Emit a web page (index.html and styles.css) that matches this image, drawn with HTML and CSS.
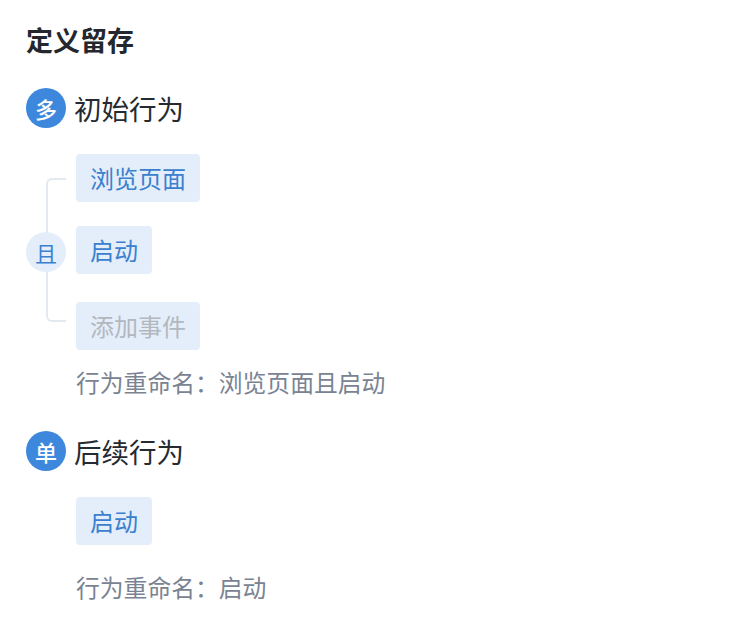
FILE: index.html
```html
<!DOCTYPE html>
<html lang="zh-CN">
<head>
<meta charset="utf-8">
<link rel="stylesheet" href="styles.css">
</head>
<body>
<div class="page">
  <h2 class="title">定义留存</h2>

  <section class="block">
    <div class="head"><span class="badge">多</span><span class="head-text">初始行为</span></div>
    <div class="group">
      <div class="connector">
        <div class="bracket"></div>
        <span class="and">且</span>
      </div>
      <div class="tags">
        <span class="tag">浏览页面</span>
        <span class="tag">启动</span>
        <span class="tag tag-add">添加事件</span>
      </div>
    </div>
    <div class="rename">行为重命名：浏览页面且启动</div>
  </section>

  <section class="block block-second">
    <div class="head"><span class="badge">单</span><span class="head-text">后续行为</span></div>
    <div class="group single">
      <div class="tags">
        <span class="tag">启动</span>
      </div>
    </div>
    <div class="rename rename-single">行为重命名：启动</div>
  </section>
</div>
</body>
</html>
```

FILE: styles.css
```css
* { box-sizing: border-box; }
html, body { margin: 0; padding: 0; background: #ffffff; }
body {
  font-family: "Noto Sans CJK SC", "Noto Sans", sans-serif;
  color: #23272e;
}
.page {
  padding: 20px 0 0 26px;
}
.title {
  margin: 0;
  font-size: 27px;
  line-height: 40px;
  font-weight: 700;
  color: #24282e;
}
.block { margin-top: 28px; }
.block-second { margin-top: 33px; }
.head {
  display: flex;
  align-items: center;
  gap: 8px;
  height: 40px;
}
.badge {
  width: 40px;
  height: 40px;
  border-radius: 50%;
  background: #3d88dc;
  color: #ffffff;
  font-size: 22px;
  font-weight: 500;
  display: flex;
  align-items: center;
  justify-content: center;
}
.head-text {
  font-size: 27.5px;
  line-height: 40px;
  color: #262a31;
}
.group {
  display: flex;
  gap: 10px;
  margin-top: 26px;
}
.group.single {
  margin-top: 26px;
  padding-left: 50px;
}
.connector {
  position: relative;
  width: 40px;
  padding: 24px 0 28px;
}
.bracket {
  margin-left: 20px;
  height: 100%;
  border: 2px solid #e2e9f1;
  border-right: none;
  border-radius: 6px 0 0 6px;
}
.and {
  position: absolute;
  left: 0;
  top: 78px;
  width: 40px;
  height: 40px;
  border-radius: 50%;
  background: #e3eefa;
  color: #3a80cf;
  font-size: 22px;
  display: flex;
  align-items: center;
  justify-content: center;
}
.tags {
  display: flex;
  flex-direction: column;
  align-items: flex-start;
  gap: 24px;
}
.tag {
  height: 48px;
  padding: 0 14px;
  border-radius: 4px;
  background: #e3eefa;
  color: #3a80cf;
  font-size: 24px;
  line-height: 48px;
}
.tag-add {
  margin-top: 4px;
  color: #b3b7be;
}
.rename {
  margin: 16px 0 0 50px;
  font-size: 23.8px;
  line-height: 32px;
  color: #7a8392;
}
.rename-single { margin-top: 26px; }
```
